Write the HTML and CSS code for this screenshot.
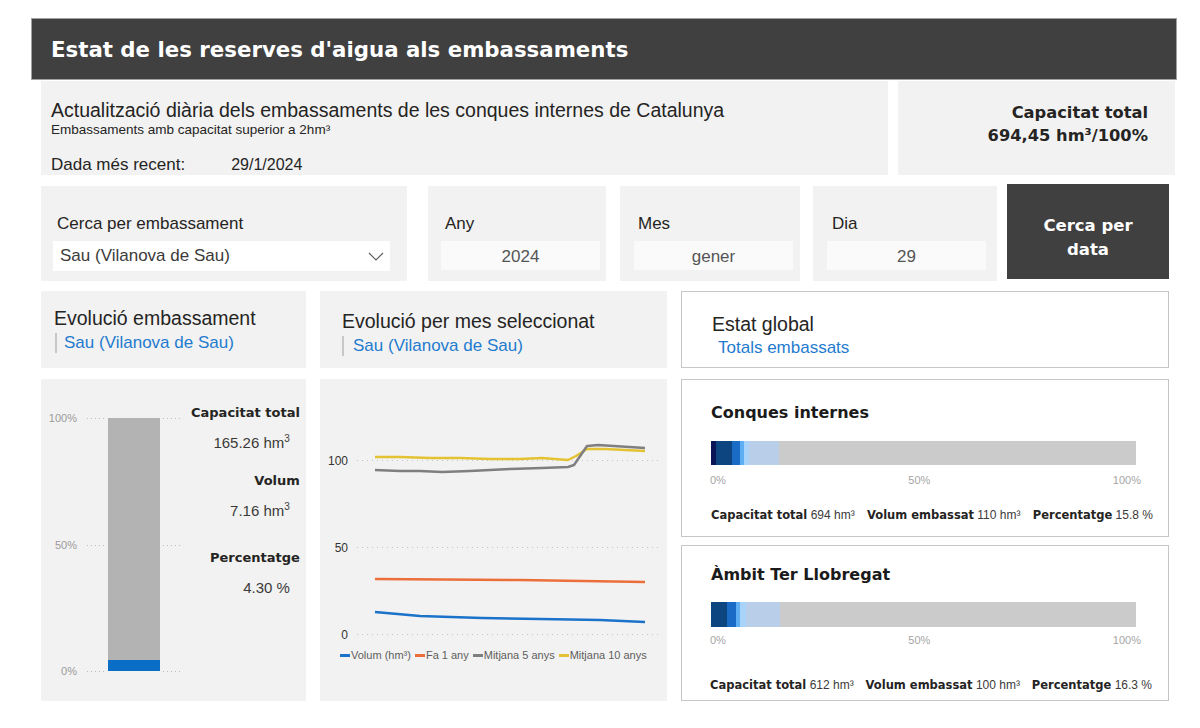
FILE: index.html
```html
<!DOCTYPE html>
<html lang="ca">
<head>
  <meta charset="UTF-8">
  <meta name="viewport" content="width=device-width, initial-scale=1.0">
  <title>Estat de les reserves d'aigua</title>
  <link rel="stylesheet" href="styles.css">
</head>
<body>
  <div class="page">
    <header class="top-bar">
      <h1>Estat de les reserves d'aigua als embassaments</h1>
    </header>

    <section class="info-row">
      <div class="panel info">
        <p class="info-title">Actualització diària dels embassaments de les conques internes de Catalunya</p>
        <p class="info-sub">Embassaments amb capacitat superior a 2hm³</p>
        <p class="info-date"><span>Dada més recent:</span><span class="date">29/1/2024</span></p>
      </div>
      <div class="panel total">
        <div>Capacitat total</div>
        <div>694,45 hm³/100%</div>
      </div>
    </section>

    <section class="filters">
      <div class="panel filter reservoir">
        <div class="filter-label">Cerca per embassament</div>
        <div class="select">
          <span>Sau (Vilanova de Sau)</span>
          <svg width="16" height="9" viewBox="0 0 16 9"><polyline points="1,1 8,8 15,1" fill="none" stroke="#605e5c" stroke-width="1.2"/></svg>
        </div>
      </div>
      <div class="panel filter date-any">
        <div class="filter-label">Any</div>
        <div class="field">2024</div>
      </div>
      <div class="panel filter date-mes">
        <div class="filter-label">Mes</div>
        <div class="field">gener</div>
      </div>
      <div class="panel filter date-dia">
        <div class="filter-label">Dia</div>
        <div class="field">29</div>
      </div>
      <button class="search-btn">Cerca per<br>data</button>
    </section>

    <section class="dash-grid">
      <div class="panel heading heading-left">
        <div class="heading-title">Evolució embassament</div>
        <div class="heading-sub">Sau (Vilanova de Sau)</div>
      </div>
      <div class="panel heading heading-mid">
        <div class="heading-title">Evolució per mes seleccionat</div>
        <div class="heading-sub">Sau (Vilanova de Sau)</div>
      </div>
      <div class="heading heading-global">
        <div class="heading-title">Estat global</div>
        <div class="heading-plain">Totals embassats</div>
      </div>

      <!-- columna: barra del embassament -->
      <div class="panel bar-card">
        <svg class="bar-chart" width="150" height="322" viewBox="0 0 150 322">
          <g font-family="Liberation Sans, Arial, sans-serif" font-size="11" fill="#9a9a9a" text-anchor="end">
            <text x="36" y="43">100%</text>
            <text x="36" y="170">50%</text>
            <text x="36" y="296">0%</text>
          </g>
          <g stroke="#bdbdbd" stroke-width="1" stroke-dasharray="1 3">
            <line x1="46" y1="39.5" x2="64" y2="39.5"/>
            <line x1="122" y1="39.5" x2="142" y2="39.5"/>
            <line x1="46" y1="166.5" x2="64" y2="166.5"/>
            <line x1="122" y1="166.5" x2="142" y2="166.5"/>
            <line x1="46" y1="292.5" x2="64" y2="292.5"/>
            <line x1="122" y1="292.5" x2="142" y2="292.5"/>
          </g>
          <rect x="67" y="39" width="52" height="253" fill="#b3b3b3"/>
          <rect x="67" y="281" width="52" height="11" fill="#0a6ec6"/>
        </svg>
        <div class="stats">
          <div class="stat">
            <div class="stat-label">Capacitat total</div>
            <div class="stat-value">165.26 hm<sup>3</sup></div>
          </div>
          <div class="stat">
            <div class="stat-label">Volum</div>
            <div class="stat-value">7.16 hm<sup>3</sup></div>
          </div>
          <div class="stat stat-pct">
            <div class="stat-label">Percentatge</div>
            <div class="stat-value">4.30 %</div>
          </div>
        </div>
      </div>

      <!-- evolucio mensual -->
      <div class="panel line-card">
        <svg class="line-chart" width="347" height="266" viewBox="0 0 347 266">
          <g stroke="#c4c4c4" stroke-width="1" stroke-dasharray="1 4">
            <line x1="37" y1="81.5" x2="340" y2="81.5"/>
            <line x1="37" y1="168.5" x2="340" y2="168.5"/>
            <line x1="37" y1="255.5" x2="340" y2="255.5"/>
          </g>
          <g font-family="Liberation Sans, Arial, sans-serif" font-size="12" fill="#333" text-anchor="end">
            <text x="28" y="86">100</text>
            <text x="28" y="173">50</text>
            <text x="28" y="260">0</text>
          </g>
          <g fill="none" stroke-width="2.5" stroke-linejoin="round">
            <polyline stroke="#e4c233" points="55,78 80,78 110,79 140,79 170,80 200,80 222,79 248,81 256,77 267,70 285,70 325,72"/>
            <polyline stroke="#7f7f7f" points="55,91 80,92 100,92 122,93 150,92 190,90 222,89 248,88 254,86 267,67 278,66 325,69"/>
            <polyline stroke="#ec6f3b" points="55,200 200,201 325,203"/>
            <polyline stroke="#1a73c9" points="55,233 100,237 162,239 220,240 280,241 325,243"/>
          </g>
        </svg>
        <div class="legend">
          <span class="legend-item"><i class="swatch sw-blue"></i>Volum (hm³)</span>
          <span class="legend-item"><i class="swatch sw-orange"></i>Fa 1 any</span>
          <span class="legend-item"><i class="swatch sw-gray"></i>Mitjana 5 anys</span>
          <span class="legend-item"><i class="swatch sw-yellow"></i>Mitjana 10 anys</span>
        </div>
      </div>

      <!-- estat global -->
      <div class="global-col">
        <div class="global-card conques">
          <div class="global-title">Conques internes</div>
          <div class="stack">
            <span class="seg c1" style="width:1.2%"></span>
            <span class="seg c2" style="width:3.7%"></span>
            <span class="seg c3" style="width:2%"></span>
            <span class="seg c4" style="width:0.85%"></span>
            <span class="seg c5" style="width:1.2%"></span>
            <span class="seg c6" style="width:7.1%"></span>
          </div>
          <div class="axis"><span>0%</span><span>50%</span><span>100%</span></div>
          <div class="summary">
            <span><b>Capacitat total</b> 694 hm³</span>
            <span><b>Volum embassat</b> 110 hm³</span>
            <span><b>Percentatge</b> 15.8 %</span>
          </div>
        </div>
        <div class="global-card ambit">
          <div class="global-title">Àmbit Ter Llobregat</div>
          <div class="stack">
            <span class="seg c2" style="width:3.76%"></span>
            <span class="seg c3" style="width:2.2%"></span>
            <span class="seg c4" style="width:0.94%"></span>
            <span class="seg c5" style="width:1.33%"></span>
            <span class="seg c6" style="width:8.07%"></span>
          </div>
          <div class="axis"><span>0%</span><span>50%</span><span>100%</span></div>
          <div class="summary">
            <span><b>Capacitat total</b> 612 hm³</span>
            <span><b>Volum embassat</b> 100 hm³</span>
            <span><b>Percentatge</b> 16.3 %</span>
          </div>
        </div>
      </div>
    </section>
  </div>
</body>
</html>
```

FILE: styles.css
```css
body {
  margin: 0;
  background: #fff;
  font-family: "Liberation Sans", Arial, sans-serif;
  color: #252423;
}
p {
  margin: 0;
}
.page {
  padding-top: 18px;
}
.panel {
  background: #f2f2f2;
}
.top-bar {
  margin-left: 31px;
  width: 1146px;
  height: 62px;
  box-sizing: border-box;
  background: #404040;
  border: 1px solid #a0a0a0;
  display: flex;
  align-items: center;
  padding-left: 19px;
}
.top-bar h1 {
  margin: 0;
  font: bold 21.3px "DejaVu Sans", sans-serif;
  color: #fff;
}

/* capçalera informativa */
.info-row {
  display: flex;
  gap: 10px;
  margin: 1px 0 0 41px;
  height: 94px;
}
.info {
  width: 847px;
  box-sizing: border-box;
  padding: 18px 0 0 10px;
}
.info-title {
  font-size: 19.5px;
  line-height: 22px;
}
.info-sub {
  font-size: 13.5px;
  line-height: 15px;
  margin-top: 1px;
}
.info-date {
  font-size: 17px;
  line-height: 18px;
  margin-top: 19px;
}
.info-date .date {
  font-size: 16px;
  margin-left: 46px;
}
.total {
  width: 277px;
  box-sizing: border-box;
  padding: 20px 27px 0 0;
  text-align: right;
  font: bold 16.3px/23px "DejaVu Sans", sans-serif;
  color: #252423;
}

/* filtres */
.filters {
  display: flex;
  margin: 11px 0 0 41px;
  height: 95px;
}
.filter {
  box-sizing: border-box;
  padding-top: 27px;
}
.filter-label {
  font-size: 17px;
  line-height: 22px;
}
.reservoir {
  width: 366px;
  padding-left: 12px;
}
.reservoir .filter-label {
  padding-left: 4px;
}
.select {
  margin-top: 6px;
  width: 337px;
  height: 30px;
  box-sizing: border-box;
  background: #fff;
  display: flex;
  align-items: center;
  justify-content: space-between;
  padding: 0 6px 0 7px;
  font-size: 17px;
  color: #3b3a39;
}
.date-any {
  width: 178px;
  margin-left: 21px;
  padding-left: 13px;
}
.date-mes {
  width: 180px;
  margin-left: 14px;
  padding-left: 14px;
}
.date-dia {
  width: 184px;
  margin-left: 13px;
  padding-left: 14px;
}
.date-any .filter-label,
.date-mes .filter-label {
  padding-left: 4px;
}
.date-dia .filter-label {
  padding-left: 5px;
}
.field {
  margin-top: 6px;
  width: 159px;
  height: 29px;
  line-height: 32px;
  background: #fafafa;
  text-align: center;
  font-size: 17px;
  color: #555;
}
.search-btn {
  margin: -2px 0 0 10px;
  width: 162px;
  height: 95px;
  border: none;
  background: #404040;
  color: #fff;
  font: bold 16.5px/24px "DejaVu Sans", sans-serif;
  padding: 13px 0 0;
}

/* graella principal */
.dash-grid {
  display: grid;
  grid-template-columns: 265px 347px 488px;
  grid-template-rows: 77px 322px;
  column-gap: 14px;
  row-gap: 11px;
  margin: 10px 0 0 41px;
}
.heading {
  box-sizing: border-box;
}
.heading-title {
  font-size: 19.5px;
  line-height: 22px;
}
.heading-sub {
  margin-top: 4px;
  border-left: 2px solid #c8c8c8;
  padding-left: 7px;
  font-size: 17px;
  line-height: 20px;
  color: #1f7bcf;
}
.heading-left {
  padding: 16px 0 0 13px;
}
.heading-left .heading-sub {
  margin-left: 1px;
}
.heading-mid {
  padding: 19px 0 0 22px;
}
.heading-mid .heading-sub {
  padding-left: 9px;
}
.heading-global {
  background: #fff;
  border: 1px solid #c6c6c6;
  padding: 21px 0 0 30px;
}
.heading-plain {
  margin: 3px 0 0 6px;
  font-size: 17px;
  line-height: 20px;
  color: #1f7bcf;
}

/* barra embassament */
.bar-card {
  display: flex;
}
.bar-chart {
  flex: none;
}
.stats {
  flex: 1;
  padding: 25px 8px 0 0;
  text-align: right;
  white-space: nowrap;
}
.stat + .stat {
  margin-top: 18px;
}
.stat.stat-pct {
  margin-top: 27px;
}
.stat-label {
  font: bold 13px/18px "DejaVu Sans", sans-serif;
  color: #252423;
}
.stat-value {
  margin-top: 10px;
  padding-right: 10px;
  font-size: 15px;
  line-height: 22px;
  color: #3b3a39;
}
.stat-value sup {
  font-size: 10px;
  vertical-align: 6px;
  line-height: 0;
}

/* linies */
.line-card {
  display: flex;
  flex-direction: column;
}
.legend {
  display: flex;
  gap: 4px;
  padding-left: 20px;
  font-size: 11px;
  line-height: 20px;
  color: #605e5c;
  white-space: nowrap;
}
.legend-item {
  display: flex;
  align-items: center;
  gap: 1px;
}
.swatch {
  display: inline-block;
  width: 10px;
  height: 3px;
}
.sw-blue { background: #1a73c9; }
.sw-orange { background: #ec6f3b; }
.sw-gray { background: #7f7f7f; }
.sw-yellow { background: #e4c233; }

/* estat global */
.global-col {
  display: flex;
  flex-direction: column;
  gap: 8px;
}
.global-card {
  background: #fff;
  border: 1px solid #c6c6c6;
  box-sizing: border-box;
  padding-left: 29px;
}
.conques {
  height: 158px;
  padding-top: 22px;
}
.ambit {
  height: 156px;
  padding-top: 18px;
}
.global-title {
  font: bold 16px/22px "DejaVu Sans", sans-serif;
  color: #1b1b1b;
}
.stack {
  display: flex;
  width: 425px;
  background: #cbcbcb;
}
.conques .stack {
  margin-top: 17px;
  height: 24px;
}
.ambit .stack {
  margin-top: 16px;
  height: 25px;
}
.seg {
  height: 100%;
}
.c1 { background: #0b1457; }
.c2 { background: #0d4580; }
.c3 { background: #1a6bc6; }
.c4 { background: #5eaef3; }
.c5 { background: #a9d3f8; }
.c6 { background: #b9cfe9; }
.axis {
  display: flex;
  justify-content: space-between;
  width: 431px;
  margin-left: -1px;
  font-size: 11px;
  line-height: 14px;
  color: #a6a6a6;
}
.conques .axis {
  margin-top: 8px;
}
.ambit .axis {
  margin-top: 6px;
}
.summary {
  display: flex;
  justify-content: space-between;
  width: 442px;
  font-size: 12px;
  line-height: 16px;
  color: #3b3a39;
  white-space: nowrap;
}
.summary b {
  font: bold 11.5px "DejaVu Sans", sans-serif;
  color: #252423;
}
.conques .summary {
  margin-top: 20px;
}
.ambit .summary {
  margin-top: 30px;
  margin-left: -1px;
}
```
